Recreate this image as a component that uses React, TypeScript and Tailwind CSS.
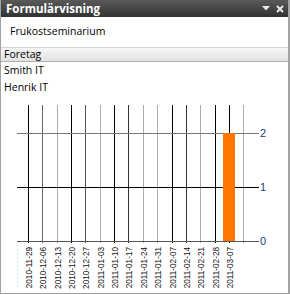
import React from "react";

const dates = [
  "2010-11-29",
  "2010-12-06",
  "2010-12-13",
  "2010-12-20",
  "2010-12-27",
  "2011-01-03",
  "2011-01-10",
  "2011-01-17",
  "2011-01-24",
  "2011-01-31",
  "2011-02-07",
  "2011-02-14",
  "2011-02-21",
  "2011-02-28",
  "2011-03-07",
];

const gridX = [27, 41, 56, 70, 84, 99, 113, 127, 142, 156, 171, 185, 199, 214, 228, 242];
const gridColor = ["#000", "#666", "#aaa", "#000", "#555", "#aaa", "#000", "#333", "#aaa", "#aaa", "#000", "#333", "#aaa", "#000", "#000", "#aaa"];

function Chart() {
  return (
    <svg width="287" height="197" className="block">
      {gridX.map((x, i) => (
        <line key={i} x1={x + 0.5} x2={x + 0.5} y1={9} y2={147} stroke={gridColor[i]} strokeWidth={1} />
      ))}
      <line x1={16.5} x2={16.5} y1={149} y2={194} stroke="#c6eef6" strokeWidth={1} strokeDasharray="2 2" />
      <line x1={16} x2={258} y1={37.5} y2={37.5} stroke="#777" strokeWidth={1} />
      <line x1={16} x2={258} y1={91.5} y2={91.5} stroke="#000" strokeWidth={1} />
      <line x1={16} x2={258} y1={145.5} y2={145.5} stroke="#555" strokeWidth={1} />
      <rect x={222} y={37} width={12} height={108} fill="#ff7700" />
      {[
        ["2", 37],
        ["1", 91],
        ["0", 145],
      ].map(([t, y]) => (
        <text
          key={t as string}
          x={259}
          y={(y as number) + 4}
          fontSize={11}
          fontFamily="'Liberation Sans', Arial, sans-serif"
          fill="#1c3a70"
        >
          {t}
        </text>
      ))}
      {dates.map((d, i) => (
        <text
          key={d}
          x={0}
          y={0}
          transform={`translate(${gridX[i] + 3.5} 151) rotate(-90)`}
          textAnchor="end"
          fontSize={8.2}
          fontFamily="'Liberation Sans', Arial, sans-serif"
          fill="#111"
        >
          {d}
        </text>
      ))}
    </svg>
  );
}

export default function App() {
  return (
    <div className="w-[290px] h-[295px] bg-white overflow-hidden font-['Open_Sans',sans-serif]">
      <div className="w-[290px] h-[294px] border-l border-r-2 border-b border-[#a3a3a3] flex flex-col">
        <div className="h-[17px] bg-gradient-to-b from-[#5a5a5a] to-[#333] flex items-center justify-between pl-[5px] pr-[4px]">
          <span className="text-white font-bold text-[11.5px] leading-none">Formulärvisning</span>
          <div className="flex items-center gap-[6px]">
            <svg width="8" height="5" viewBox="0 0 8 5">
              <path d="M0 0H8L4 4.5Z" fill="#e8e8e8" />
            </svg>
            <svg width="8" height="8" viewBox="0 0 8 8">
              <path d="M1 1L7 7M7 1L1 7" stroke="#e8e8e8" strokeWidth="2" />
            </svg>
          </div>
        </div>
        <div className="h-[30px] flex items-center pl-[9px] text-[10.5px] text-black">Frukostseminarium</div>
        <div className="h-[15px] border-t border-[#d4d4d4] border-b border-b-[#b0b0b0] bg-gradient-to-b from-[#f6f6f6] to-[#e2e2e2] flex items-center pl-[3px] text-[10.5px] text-black">
          Foretag
        </div>
        <div className="h-[17px] flex items-center pl-[3px] text-[10.5px] text-black">Smith IT</div>
        <div className="h-[17px] flex items-center pl-[3px] text-[10.5px] text-black">Henrik IT</div>
        <Chart />
      </div>
    </div>
  );
}
